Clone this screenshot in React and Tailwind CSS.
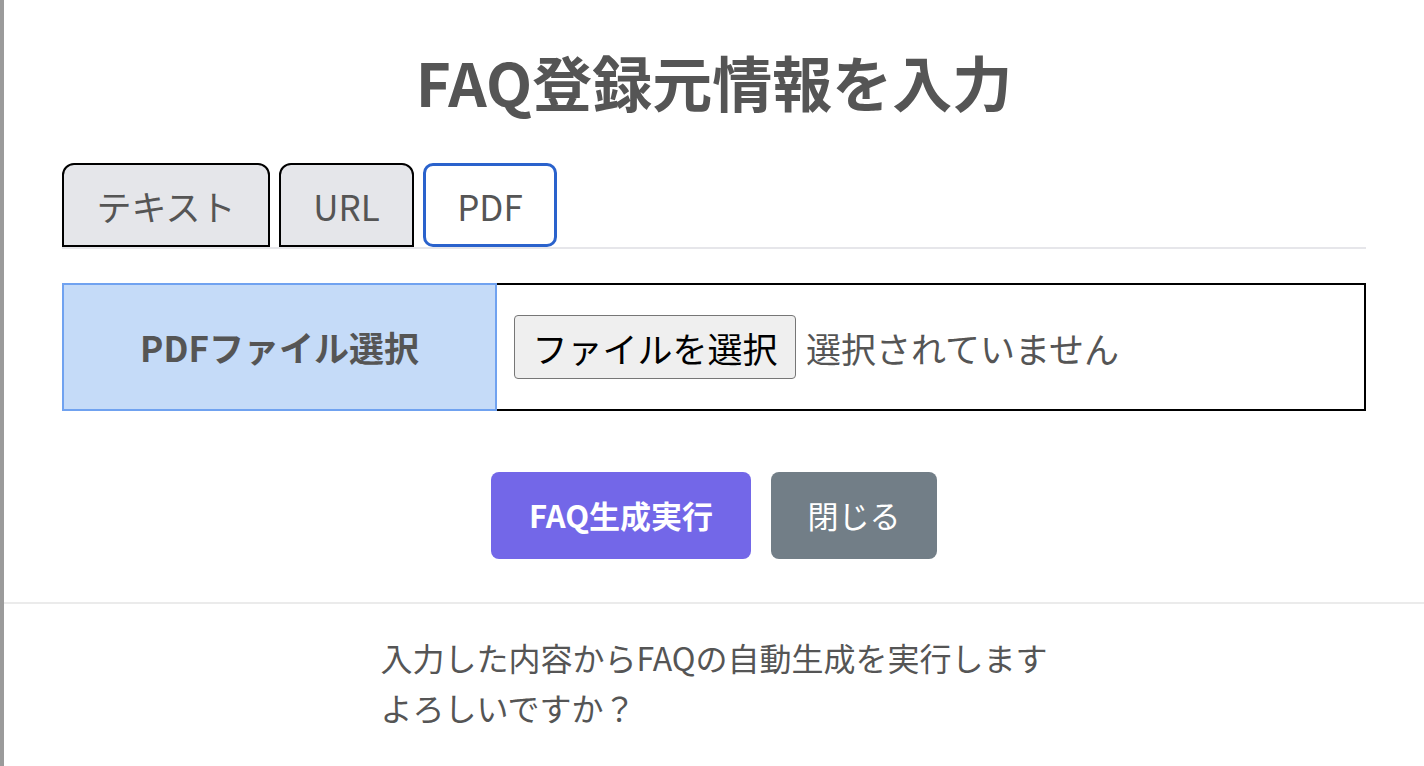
export default function App() {
  const tabs = [
    { label: "テキスト", w: "w-[208px]" },
    { label: "URL", w: "w-[135px]" },
  ];

  return (
    <div className="flex min-h-screen bg-white font-['Noto_Sans_CJK_JP',sans-serif] text-[#555]">
      {/* left edge */}
      <div className="w-1 shrink-0 bg-[#9b9b9b]" />

      <div className="flex-1">
        <div className="px-[58px] pt-[39px]">
          {/* Title */}
          <h1 className="text-center text-[60px] font-bold leading-[84px] text-[#555]">
            FAQ登録元情報を入力
          </h1>

          {/* Tabs */}
          <div className="mt-[40px] flex items-end gap-[9px] border-b-2 border-[#e6e6ea]">
            {tabs.map((t) => (
              <button
                key={t.label}
                className={`${t.w} h-[84px] rounded-t-[12px] border-2 border-black bg-[#e5e6ea] text-[35px] leading-none text-[#555]`}
              >
                {t.label}
              </button>
            ))}
            <button className="w-[134px] h-[84px] rounded-[10px] border-[3px] border-[#2a62cc] bg-white text-[35px] leading-none text-[#555]">
              PDF
            </button>
          </div>

          {/* File row */}
          <div className="mt-[34px] flex h-[128px]">
            <div className="flex w-[435px] shrink-0 items-center justify-center border-2 border-[#70a2f0] bg-[#c5dbf8] text-[35px] font-bold text-[#555]">
              PDFファイル選択
            </div>
            <div className="flex flex-1 items-center gap-[10px] border-2 border-l-0 border-black pl-[17px]">
              <button className="flex h-[64px] w-[282px] items-center justify-center rounded-[4px] border border-[#767676] bg-[#efefef] text-[35px] leading-none text-black">
                ファイルを選択
              </button>
              <span className="text-[35px] leading-none text-[#555]">選択されていません</span>
            </div>
          </div>

          {/* Actions */}
          <div className="mt-[61px] flex justify-center gap-[20px]">
            <button className="flex h-[87px] w-[260px] items-center justify-center rounded-[8px] bg-[#7367e8] text-[31px] font-bold text-white">
              FAQ生成実行
            </button>
            <button className="flex h-[87px] w-[166px] items-center justify-center rounded-[8px] bg-[#727e87] text-[31px] text-white">
              閉じる
            </button>
          </div>
        </div>

        {/* Footer */}
        <div className="mt-[43px] border-t-2 border-[#ebebeb] pt-[28px] text-center">
          <p className="inline-block text-left text-[32px] leading-[50px] text-[#555]">
            入力した内容からFAQの自動生成を実行します
            <br />
            よろしいですか？
          </p>
        </div>
      </div>
    </div>
  );
}
